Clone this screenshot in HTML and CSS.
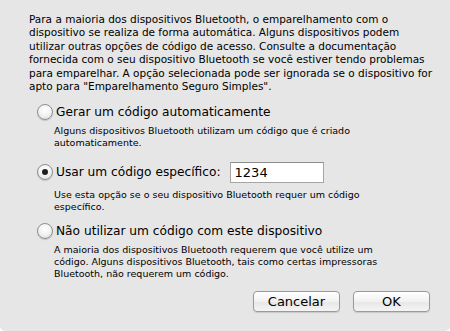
FILE: index.html
```html
<!DOCTYPE html>
<html lang="pt">
<head>
  <meta charset="UTF-8">
  <title>Código de acesso</title>
  <link rel="stylesheet" href="styles.css">
</head>
<body>
  <div class="dialog">
    <p class="intro">Para a maioria dos dispositivos Bluetooth, o emparelhamento com o<br>dispositivo se realiza de forma automática. Alguns dispositivos podem<br>utilizar outras opções de código de acesso. Consulte a documentação<br>fornecida com o seu dispositivo Bluetooth se você estiver tendo problemas<br>para emparelhar. A opção selecionada pode ser ignorada se o dispositivo for<br>apto para "Emparelhamento Seguro Simples".</p>

    <div class="option auto">
      <label class="choice"><span class="radio"></span>Gerar um código automaticamente</label>
      <p class="hint">Alguns dispositivos Bluetooth utilizam um código que é criado<br>automaticamente.</p>
    </div>

    <div class="option specific">
      <label class="choice"><span class="radio checked"></span>Usar um código específico:<input class="code" type="text" value="1234"></label>
      <p class="hint">Use esta opção se o seu dispositivo Bluetooth requer um código<br>específico.</p>
    </div>

    <div class="option none">
      <label class="choice"><span class="radio"></span>Não utilizar um código com este dispositivo</label>
      <p class="hint">A maioria dos dispositivos Bluetooth requerem que você utilize um<br>código. Alguns dispositivos Bluetooth, tais como certas impressoras<br>Bluetooth, não requerem um código.</p>
    </div>

    <div class="actions">
      <button class="btn cancel">Cancelar</button>
      <button class="btn ok">OK</button>
    </div>
  </div>
</body>
</html>
```

FILE: styles.css
```css
html, body {
  margin: 0;
  padding: 0;
  background: #ffffff;
}

.dialog {
  width: 450px;
  height: 331px;
  box-sizing: border-box;
  background: #e6e6e6;
  border-radius: 0 0 5px 5px;
  padding: 13px 0 0 29px;
  font-family: "DejaVu Sans", sans-serif;
  color: #000;
}

.intro {
  margin: 0 0 9px;
  font-size: 10.5px;
  line-height: 13.4px;
}

.option {
  margin-left: 8px;
}

.choice {
  display: flex;
  align-items: center;
  font-size: 12.2px;
  height: 20px;
}

.radio {
  width: 14px;
  height: 14px;
  border-radius: 50%;
  border: 1px solid #8e8e8e;
  background: radial-gradient(circle at 50% 35%, #ffffff 0%, #f4f4f4 45%, #d6d6d6 100%);
  box-shadow: 0 1px 1px rgba(0, 0, 0, 0.15);
  margin-right: 3px;
  position: relative;
  flex: none;
}

.radio.checked::after {
  content: "";
  position: absolute;
  left: 4px;
  top: 4px;
  width: 6px;
  height: 6px;
  border-radius: 50%;
  background: #1e1e1e;
}

.code {
  margin-left: 9px;
  width: 94px;
  height: 21px;
  box-sizing: border-box;
  border: 1px solid #a5a5a5;
  border-top-color: #8c8c8c;
  background: #fff;
  font-family: "DejaVu Sans", sans-serif;
  font-size: 13px;
  padding: 1px 4px 0;
}

.hint {
  margin: 3px 0 0 17px;
  font-size: 9.5px;
  line-height: 12px;
}

.auto .hint {
  margin-bottom: 13px;
}

.specific .hint {
  margin-top: 7px;
  margin-bottom: 8px;
}

.none .hint {
  margin-bottom: 11px;
}

.actions {
  display: flex;
  justify-content: flex-end;
  gap: 13px;
  padding-right: 20px;
}

.btn {
  height: 21px;
  border: 1px solid #9a9a9a;
  border-radius: 4px;
  background: linear-gradient(#ffffff, #f1f1f1 50%, #e6e6e6 51%, #f4f4f4);
  box-shadow: 0 1px 1px rgba(0, 0, 0, 0.12);
  font-family: "DejaVu Sans", sans-serif;
  font-size: 13px;
  color: #000;
  padding: 0;
}

.cancel {
  width: 87px;
}

.ok {
  width: 77px;
}
```
